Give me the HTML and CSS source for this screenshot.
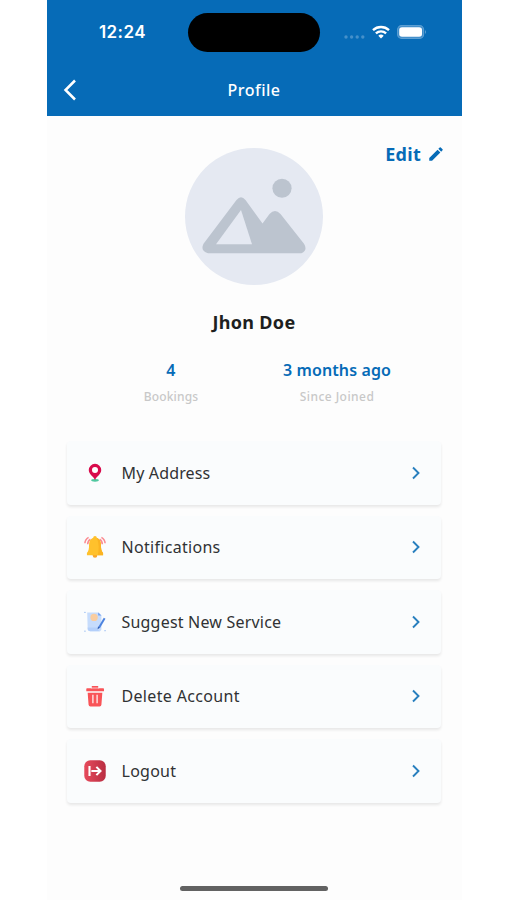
FILE: index.html
```html
<!DOCTYPE html>
<html lang="en">
<head>
<meta charset="utf-8">
<title>Profile</title>
<link rel="stylesheet" href="styles.css">
</head>
<body>
<main class="phone">
  <header class="top">
    <div class="status">
      <span class="time">12:24</span>
      <span class="island"></span>
      <span class="indicators">
        <svg width="22" height="6" viewBox="0 0 22 6" fill="#4590ca"><circle cx="3" cy="3" r="1.700"/><circle cx="8.600" cy="3" r="1.700"/><circle cx="14.200" cy="3" r="1.700"/><circle cx="19.800" cy="3" r="1.700"/></svg>
        <svg class="wifi" width="18" height="14" viewBox="0 0 18 14" fill="none" stroke="#fff" stroke-width="2.400"><path d="M1 5.100C5.600.900 12.400.900 17 5.100"/><path d="M3.900 8.300C6.800 5.700 11.200 5.700 14.100 8.300"/><path d="M9 13.500 6.300 10.700Q9 8.500 11.700 10.700Z" fill="#fff" stroke="none"/></svg>
        <svg class="battery" width="30" height="14" viewBox="0 0 30 14"><rect x=".600" y=".600" width="26" height="12.800" rx="4" fill="#3d8bc8" stroke="#5c9fd3" stroke-width="1.100"/><rect x="2.200" y="2.200" width="22.800" height="9.600" rx="2.800" fill="#fff"/><path d="M28 5Q30 7 28 9Z" fill="#5c9fd3"/></svg>
      </span>
    </div>
    <nav class="bar">
      <svg width="14" height="22" viewBox="0 0 14 22" fill="none" stroke="#fff" stroke-width="2.500"><path d="M12 1.500 2.500 11 12 20.500"/></svg>
      <h1 class="title">Profile</h1>
    </nav>
  </header>
  <section class="profile">
    <svg class="avatar" width="138" height="137" viewBox="0 0 138 138" preserveAspectRatio="none"><circle cx="69" cy="69" r="69" fill="#e5e9f2"/><circle cx="97" cy="40.500" r="9.600" fill="#bcc4cf"/><path d="M51.500 52.500Q56 46.500 60.500 52.500L77.500 76L84.500 66.500Q90 60.500 95.500 66.500L119 96.500Q123 103 116.500 106H23Q15 104 18.500 96.500Z" fill="#bcc4cf"/><path d="M56 62.500 67 97H31Z" fill="#e5e9f2"/></svg>
    <a class="edit"><span>Edit</span><svg width="18" height="18" viewBox="0 0 24 24" fill="#066bb7"><path d="M3 17.250V21h3.750L17.810 9.940l-3.750-3.750zM20.710 7.040a1 1 0 0 0 0-1.410l-2.340-2.340a1 1 0 0 0-1.410 0l-1.830 1.830 3.750 3.750z"/></svg></a>
  </section>
  <h2 class="name">Jhon Doe</h2>
  <section class="stats">
    <div class="stat"><strong>4</strong><span class="bookings">Bookings</span></div>
    <div class="stat"><strong>3 months ago</strong><span class="joined">Since Joined</span></div>
  </section>
  <ul class="menu">
    <li class="item"><svg class="icon" viewBox="0 0 24 24"><ellipse cx="12" cy="20" rx="4.200" ry="1.500" fill="#4fc8a0"/><path d="M12 19.500C10 15.500 5.200 13.500 5.200 8.800a6.800 6.800 0 0 1 13.600 0c0 4.700-4.800 6.700-6.800 10.700Z" fill="#d80b4c"/><circle cx="12" cy="8.700" r="3.300" fill="#fff"/></svg><span class="label address">My Address</span><svg class="go" viewBox="0 0 10 14"><path d="m2 1.500 5.500 5.500L2 12.500"/></svg></li>
    <li class="item"><svg class="icon" viewBox="0 0 24 24"><path d="M5 1.500Q1.200 3.500 1 8M7 3.500Q4.200 5 4 9M19 1.500q3.800 2 4 6.500M17 3.500q2.800 1.500 3 5.500" fill="none" stroke="#fb8b91" stroke-width="1.700"/><circle cx="12" cy="21.300" r="2.500" fill="#f9a52b"/><path d="M12 0a2 2 0 0 1 2 1.900c3.300 1.200 4.500 4.300 4.500 8 0 4.500.5 6.600 2.300 8.600v2.500H3.200v-2.500c1.800-2 2.300-4.100 2.300-8.600 0-3.700 1.200-6.800 4.500-8A2 2 0 0 1 12 0Z" fill="#ffc12c"/><path d="M14 1.900c3.300 1.200 4.500 4.300 4.500 8 0 4.500.5 6.600 2.300 8.600v2.500H15c1.500-6 1.500-13-1-19.100Z" fill="#fbb321"/></svg><span class="label notifications">Notifications</span><svg class="go" viewBox="0 0 10 14"><path d="m2 1.500 5.500 5.500L2 12.500"/></svg></li>
    <li class="item"><svg class="icon" viewBox="0 0 24 24"><path d="M3.500 1.500h12.500l3 3V20q0 2-2 2H7q-3 0-3-3Z" fill="#c6dcfc"/><path d="M4 18h11q0 4 3 4H7q-3 0-3-3Z" fill="#b3cffa"/><path d="M15.500 1.500 19 5h-3.500Z" fill="#6f9ff0"/><circle cx="11" cy="7" r="4" fill="#f9cda0"/><path d="m22.500 8-6 10" stroke="#4c83df" stroke-width="2.200"/><path d="m15.300 17-.5 3 2.700-1.600Z" fill="#315fb5"/><path d="M0 1.500h2M0 22h2M22 21.500h2" stroke="#a5c4f3"/></svg><span class="label suggest">Suggest New Service</span><svg class="go" viewBox="0 0 10 14"><path d="m2 1.500 5.500 5.500L2 12.500"/></svg></li>
    <li class="item"><svg class="icon" viewBox="0 0 24 24"><path d="M8.500 1h7v2.500H21q.800 0 .800.800v2.500H2.500V4.300q0-.800.800-.800h5.200ZM4 8.500h16l-1 13q-.2 2-2 2H7q-1.800 0-2-2Z" fill="#f95458"/><path d="M7.500 3.300h9" stroke="#fafcfd" stroke-width=".7"/><path d="M9.700 10.500V20M14.300 10.500V20" stroke="#fff" stroke-opacity=".85" stroke-width="1.500"/></svg><span class="label delete">Delete Account</span><svg class="go" viewBox="0 0 10 14"><path d="m2 1.500 5.500 5.500L2 12.500"/></svg></li>
    <li class="item"><svg class="icon" viewBox="0 0 24 24"><defs><linearGradient id="red"><stop stop-color="#e64b5c"/><stop offset="1" stop-color="#b92e42"/></linearGradient></defs><rect x=".300" y=".300" width="23.400" height="23.400" rx="6.500" fill="url(#red)"/><path d="M6 6.500v11M8 12h10M13.500 7.500 18 12l-4.500 4.500" fill="none" stroke="#fff" stroke-width="2.300"/></svg><span class="label logout">Logout</span><svg class="go" viewBox="0 0 10 14"><path d="m2 1.500 5.500 5.500L2 12.500"/></svg></li>
  </ul>
  <div class="home"></div>
</main>
</body>
</html>
```
FILE: styles.css
```css
* { box-sizing: border-box; }
body { margin: 0; background: #fff; font-family: "Noto Sans", sans-serif; }
h1, h2, ul { margin: 0; padding: 0; }
.phone { width: 415px; height: 900px; margin-left: 46.500px; background: #fdfdfd; display: flex; flex-direction: column; overflow: hidden; }
.top { height: 115.500px; background: #066bb7; color: #fff; flex: none; }
.status { height: 64px; display: grid; grid-template-columns: 141.500px 132px 1fr; align-items: center; }
.time { padding-left: 52.500px; font: 600 17px/20px Inter, sans-serif; letter-spacing: .4px; }
.island { height: 39px; background: #000; border-radius: 20px; }
.indicators { display: flex; align-items: center; padding-left: 22.500px; }
.indicators > svg:first-child { margin-top: 9px; }
.wifi { margin-left: 7px; }
.battery { margin-left: 7.500px; }
.bar { height: 51px; display: grid; grid-template-columns: 42px 1fr 42px; align-items: center; }
.bar svg { margin-left: 16px; }
.title { text-align: center; font-size: 16px; line-height: 24px; font-weight: 500; letter-spacing: .5px; }
.profile { display: grid; grid-template-columns: 1fr 138px 1fr; margin-top: 32px; height: 138px; flex: none; }
.avatar { grid-column: 2; }
.edit { display: flex; justify-content: flex-end; align-items: center; gap: 5.500px; height: 24px; margin: -6px 17px 0 0; color: #066bb7; font-size: 18px; font-weight: 700; letter-spacing: .3px; }
.name { margin-top: 24px; text-align: center; font-size: 18px; line-height: 24px; font-weight: 700; letter-spacing: .3px; color: #1e1f20; }
.stats { display: grid; grid-template-columns: 166px 166px; justify-content: center; margin-top: 25px; }
.stat { display: flex; flex-direction: column; align-items: center; color: #066bb7; font-size: 16px; line-height: 22px; }
.stat strong { font-weight: 600; white-space: nowrap; letter-spacing: .1px; }
.stat span { margin-top: 7px; color: #c8c8c8; font-size: 12px; line-height: 18px; font-weight: 500; }
.stat .bookings { letter-spacing: .15px; }
.stat .joined { letter-spacing: .45px; }
.menu { list-style: none; display: flex; flex-direction: column; gap: 11px; margin: 35.500px 21px 0 20.500px; }
.item { height: 63.500px; border-radius: 4px; background: #fafcfd; box-shadow: 0 2px 3px rgba(0,0,0,.09); display: flex; align-items: center; padding: 0 20px 0 17px; }
.icon { width: 22px; height: 22px; margin-right: 15.500px; flex: none; }
.label { font-size: 16px; line-height: 24px; color: #303234; white-space: nowrap; }
.address { letter-spacing: .15px; }
.notifications { letter-spacing: .3px; }
.suggest { letter-spacing: .2px; }
.delete { letter-spacing: .33px; }
.logout { letter-spacing: .25px; }
.go { width: 10px; height: 14px; margin-left: auto; fill: none; stroke: #287fbe; stroke-width: 1.900; }
.home { width: 148px; height: 5px; margin: auto auto 9px 133.500px; border-radius: 3px; background: #626262; flex: none; }
```
